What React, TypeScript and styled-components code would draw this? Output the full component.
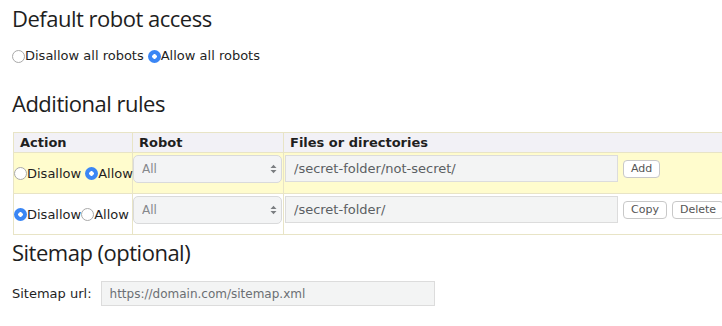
import React from 'react';
import styled, { createGlobalStyle } from 'styled-components';

const GlobalStyle = createGlobalStyle`
  html, body {
    margin: 0;
    padding: 0;
    overflow: hidden;
    background: #ffffff;
  }
  body {
    font-family: "DejaVu Sans", Verdana, sans-serif;
    color: #1f1f1f;
  }
`;

const Page = styled.div`
  padding: 5px 0 0 12px;
`;

const Heading = styled.h2<{ $top?: number }>`
  font-family: "Open Sans", "Noto Sans", sans-serif;
  font-weight: 400;
  font-size: 22px;
  line-height: 26px;
  letter-spacing: -0.5px;
  color: #1e1e1e;
  margin: ${(p) => p.$top ?? 0}px 0 0 0;
`;

const RadioRow = styled.div`
  display: flex;
  align-items: center;
  margin-top: 17px;
  font-size: 13px;
  line-height: 16px;
`;

const Choice = styled.label<{ $gap?: number }>`
  display: inline-flex;
  align-items: center;
  margin-right: ${(p) => p.$gap ?? 0}px;
  white-space: nowrap;
`;

const Radio = styled.input.attrs({ type: 'radio' })`
  appearance: none;
  margin: 0;
  width: 13px;
  height: 13px;
  border-radius: 50%;
  border: 1px solid #a9a9a9;
  background: #ffffff;
  box-sizing: border-box;
  flex: none;
  &:checked {
    border: none;
    background: radial-gradient(circle, #ffffff 0 2px, #3a86f5 2.5px);
  }
`;

const Table = styled.div`
  margin-top: 16px;
  margin-left: 1px;
  display: grid;
  grid-template-columns: 119px 151px 1fr;
  border-top: 1px solid #e8e4c6;
  border-left: 1px solid #e8e4c6;
`;

const HeadCell = styled.div<{ $last?: boolean }>`
  background: #f2f1f6;
  font-weight: bold;
  font-size: 13px;
  height: 19px;
  line-height: 19px;
  padding-left: 6px;
  border-right: ${(p) => (p.$last ? 'none' : '1px solid #e8e4c6')};
  border-bottom: 1px solid #e8e4c6;
`;

const Cell = styled.div<{ $hl?: boolean; $center?: boolean; $last?: boolean }>`
  background: ${(p) => (p.$hl ? '#fffccd' : '#ffffff')};
  border-right: ${(p) => (p.$last ? 'none' : '1px solid #e8e4c6')};
  border-bottom: 1px solid #e8e4c6;
  height: 41px;
  box-sizing: border-box;
  padding: ${(p) => (p.$center ? '0' : '2px 0 0 0')};
  display: flex;
  align-items: ${(p) => (p.$center ? 'center' : 'flex-start')};
  font-size: 13px;
`;

const SelectWrap = styled.div`
  position: relative;
  width: 149px;
  height: 28px;
`;

const Select = styled.select`
  appearance: none;
  width: 100%;
  height: 100%;
  box-sizing: border-box;
  border: 1px solid #d9dadb;
  border-radius: 5px;
  background: #f3f4f5;
  color: #85888c;
  font-family: "DejaVu Sans", Verdana, sans-serif;
  font-size: 12px;
  padding: 0 0 0 8px;
`;

const Arrows = styled.svg`
  position: absolute;
  right: 5px;
  top: 9px;
  pointer-events: none;
`;

const TextInput = styled.input.attrs({ type: 'text', readOnly: true })<{ $w: number; $h?: number; $ml?: number }>`
  width: ${(p) => p.$w}px;
  height: ${(p) => p.$h ?? 27}px;
  box-sizing: border-box;
  border: 1px solid #dcdcdc;
  background: #f3f4f4;
  color: #5b5f63;
  font-family: "DejaVu Sans", Verdana, sans-serif;
  font-size: 13px;
  padding: 0 8px;
  margin: 0 0 0 ${(p) => p.$ml ?? 0}px;
  outline: none;
  &::placeholder {
    color: #6b6f73;
    font-size: 12px;
  }
`;

const Buttons = styled.div`
  display: flex;
  gap: 5px;
  margin: 5px 0 0 5px;
`;

const Button = styled.button`
  height: 18px;
  box-sizing: border-box;
  border: 1px solid #c8c8c8;
  border-radius: 4px;
  background: #ffffff;
  color: #555;
  font-family: "DejaVu Sans", Verdana, sans-serif;
  font-size: 11px;
  padding: 0 7px;
  line-height: 16px;
`;

const Field = styled.div`
  display: flex;
  align-items: center;
  margin-top: 16px;
  font-size: 13px;
  gap: 9px;
`;

const RobotSelect: React.FC = () => (
  <SelectWrap>
    <Select defaultValue="all">
      <option value="all">All</option>
    </Select>
    <Arrows width="7" height="10" viewBox="0 0 7 10">
      <path d="M0.5 4 L3.5 0.8 L6.5 4 Z" fill="#7a7d80" />
      <path d="M0.5 6 L3.5 9.2 L6.5 6 Z" fill="#7a7d80" />
    </Arrows>
  </SelectWrap>
);

type Rule = { allow: boolean; path: string; buttons: string[]; hl: boolean; gap: number };

const rules: Rule[] = [
  { allow: true, path: '/secret-folder/not-secret/', buttons: ['Add'], hl: true, gap: 4 },
  { allow: false, path: '/secret-folder/', buttons: ['Copy', 'Delete'], hl: false, gap: 0 },
];

export default function App() {
  return (
    <>
      <GlobalStyle />
      <Page>
        <Heading>Default robot access</Heading>
        <RadioRow>
          <Choice $gap={4}>
            <Radio name="default" />
            Disallow all robots
          </Choice>
          <Choice>
            <Radio name="default" defaultChecked />
            Allow all robots
          </Choice>
        </RadioRow>

        <Heading $top={26}>Additional rules</Heading>
        <Table>
          <HeadCell>Action</HeadCell>
          <HeadCell>Robot</HeadCell>
          <HeadCell $last>Files or directories</HeadCell>
          {rules.map((r, i) => (
            <React.Fragment key={i}>
              <Cell $hl={r.hl} $center>
                <Choice $gap={r.gap}>
                  <Radio name={`rule${i}`} defaultChecked={!r.allow} />
                  Disallow
                </Choice>
                <Choice>
                  <Radio name={`rule${i}`} defaultChecked={r.allow} />
                  Allow
                </Choice>
              </Cell>
              <Cell $hl={r.hl}>
                <RobotSelect />
              </Cell>
              <Cell $hl={r.hl} $last>
                <TextInput $w={333} $ml={1} defaultValue={r.path} />
                <Buttons>
                  {r.buttons.map((b) => (
                    <Button key={b}>{b}</Button>
                  ))}
                </Buttons>
              </Cell>
            </React.Fragment>
          ))}
        </Table>

        <Heading $top={4}>Sitemap (optional)</Heading>
        <Field>
          <span>Sitemap url:</span>
          <TextInput $w={334} $h={25} placeholder="https://domain.com/sitemap.xml" />
        </Field>
      </Page>
    </>
  );
}
